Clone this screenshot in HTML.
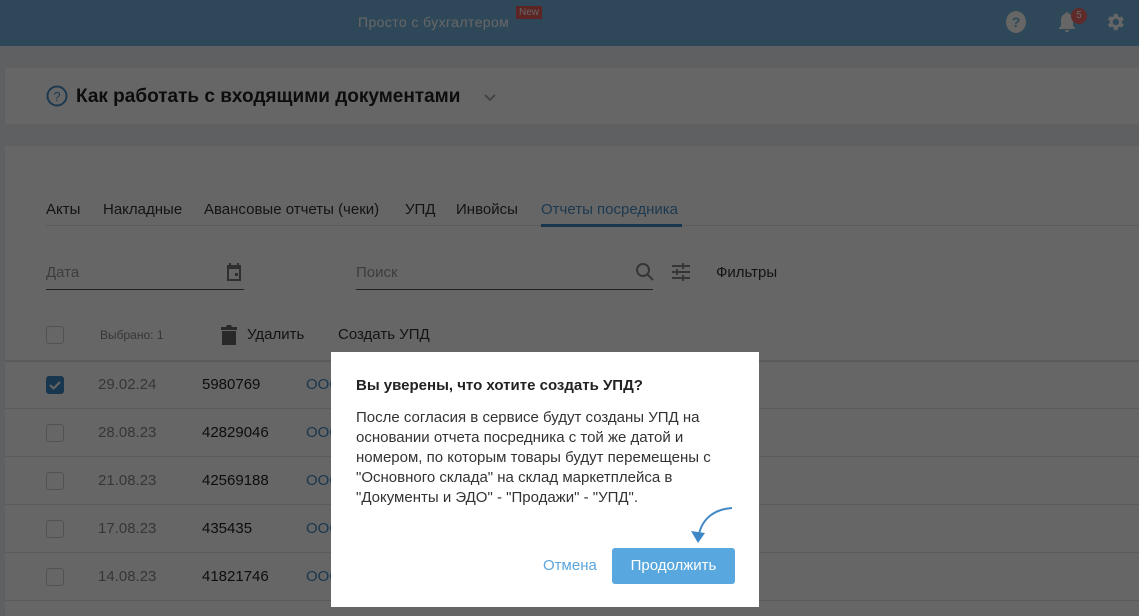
<!DOCTYPE html>
<html><head><meta charset="utf-8"><style>
*{box-sizing:border-box;margin:0;padding:0}
body{width:1139px;height:616px;overflow:hidden;background:#eef0f2;font-family:"Liberation Sans","Noto Sans CJK SC",sans-serif;position:relative;color:#333}
.hdr{position:absolute;left:0;top:0;width:1139px;height:46px;background:#75b4de}
.card{position:absolute;background:#fff}
.t{position:absolute;white-space:nowrap}
.ov{position:absolute;left:0;top:0;width:1139px;height:616px;background:rgba(0,0,0,0.6)}
.cb{position:absolute;left:46px;width:18px;height:18px;border:1px solid #ccc;border-radius:3px;background:#fff}
.line{position:absolute;left:5px;right:0;height:1px;background:#e4e4e4}
.modal{position:absolute;left:331px;top:352px;width:428px;height:255px;background:#fff}
</style></head><body>
<div class="hdr">
 <div class="t" style="left:358px;top:14px;font-size:14px;color:#fff;letter-spacing:0.4px">Просто с бухгалтером</div>
 <div class="t" style="left:516px;top:6px;font-size:10px;color:#fff;background:#e85a5a;padding:1px 3px">New</div>
 <svg style="position:absolute;left:1006px;top:11px" width="20" height="22" viewBox="0 0 20 22"><ellipse cx="10" cy="11" rx="10" ry="11" fill="#fff"/><text x="10" y="16" font-size="14" font-weight="bold" text-anchor="middle" fill="#75b4de" font-family="Liberation Sans">?</text></svg>
 <svg style="position:absolute;left:1057px;top:11px" width="20" height="22" viewBox="0 0 20 22"><path d="M10 1c-1 0-1.5.8-1.5 1.6C5.5 3.5 4 6 4 9v6l-2 2v1h16v-1l-2-2V9c0-3-1.5-5.5-4.5-6.4C11.5 1.8 11 1 10 1zM8 19a2 2 0 004 0z" fill="#fff"/></svg>
 <div class="t" style="left:1071px;top:8px;width:16px;height:16px;border-radius:8px;background:#f06a6a;color:#fff;font-size:10px;text-align:center;line-height:16px">5</div>
 <svg style="position:absolute;left:1104px;top:11px" width="22" height="22" viewBox="0 0 24 24"><path fill="#fff" d="M19.4 13a7.5 7.5 0 000-2l2.1-1.6-2-3.5-2.5 1a7 7 0 00-1.7-1L14.9 3h-4l-.4 2.7a7 7 0 00-1.7 1l-2.5-1-2 3.5L6.4 11a7.5 7.5 0 000 2l-2.1 1.6 2 3.5 2.5-1a7 7 0 001.7 1l.4 2.7h4l.4-2.7a7 7 0 001.7-1l2.5 1 2-3.5zM12.9 15.5a3.5 3.5 0 110-7 3.5 3.5 0 010 7z"/></svg>
</div>
<div class="card" style="left:5px;top:68px;width:1134px;height:56px">
 <svg style="position:absolute;left:41px;top:17px" width="22" height="22" viewBox="0 0 22 22"><circle cx="11" cy="11" r="9.5" fill="none" stroke="#4a90c8" stroke-width="2"/><text x="11" y="16" font-size="13" text-anchor="middle" fill="#4a90c8" font-family="Liberation Sans">?</text></svg>
 <div class="t" style="left:71px;top:18px;font-size:19px;font-weight:bold;color:#222">Как работать с входящими документами</div>
 <svg style="position:absolute;left:478px;top:25px" width="14" height="10" viewBox="0 0 14 10"><path d="M2 2l5 5 5-5" stroke="#aaa" stroke-width="2" fill="none"/></svg>
</div>
<div class="card" style="left:5px;top:146px;width:1134px;height:470px">
 <div class="t" style="left:41px;top:55px;font-size:15px;color:#333">Акты</div>
 <div class="t" style="left:98px;top:55px;font-size:15px;color:#333">Накладные</div>
 <div class="t" style="left:199px;top:55px;font-size:15px;color:#333">Авансовые отчеты (чеки)</div>
 <div class="t" style="left:400px;top:55px;font-size:15px;color:#333">УПД</div>
 <div class="t" style="left:451px;top:55px;font-size:15px;color:#333">Инвойсы</div>
 <div class="t" style="left:536px;top:55px;font-size:15px;color:#4a90c8">Отчеты посредника</div>
 <div style="position:absolute;left:41px;top:79px;right:0;height:1px;background:#e4e4e4"></div>
 <div style="position:absolute;left:536px;top:78px;width:141px;height:3px;background:#3f88c5"></div>
 <div class="t" style="left:41px;top:118px;font-size:15px;color:#999">Дата</div>
 <svg style="position:absolute;left:219px;top:116px" width="20" height="20" viewBox="0 0 20 20"><path fill="#777" d="M3 3h2V1h2v2h6V1h2v2h2v16H3zM5 7v10h10V7zm6 4h3v3h-3z"/></svg>
 <div style="position:absolute;left:41px;top:143px;width:198px;height:1px;background:#555"></div>
 <div class="t" style="left:351px;top:118px;font-size:15px;color:#999">Поиск</div>
 <svg style="position:absolute;left:630px;top:116px" width="20" height="20" viewBox="0 0 20 20"><circle cx="8" cy="8" r="6" fill="none" stroke="#888" stroke-width="2"/><path d="M12.5 12.5l5.5 5.5" stroke="#888" stroke-width="2"/></svg>
 <div style="position:absolute;left:351px;top:143px;width:297px;height:1px;background:#555"></div>
 <svg style="position:absolute;left:666px;top:116px" width="20" height="20" viewBox="0 0 20 20" stroke="#888" stroke-width="2"><path d="M1 4h18M1 10h18M1 16h18"/><path d="M12 1v6M6 7v6M12 13v6" /></svg>
 <div class="t" style="left:711px;top:118px;font-size:15px;color:#333">Фильтры</div>
 <div class="cb" style="left:41px;top:180px"></div>
 <div class="t" style="left:95px;top:182px;font-size:12px;color:#888">Выбрано: 1</div>
 <svg style="position:absolute;left:215px;top:178px" width="18" height="22" viewBox="0 0 18 22"><path fill="#666" d="M1 3h5l1-2h4l1 2h5v3H1zM2 7h14v14H2z"/></svg>
 <div class="t" style="left:242px;top:180px;font-size:15px;color:#333">Удалить</div>
 <div class="t" style="left:333px;top:180px;font-size:15px;color:#333">Создать УПД</div>
</div>
<div class="line" style="top:360px;height:2px"></div>
<div class="line" style="top:408px"></div><div class="line" style="top:456px"></div><div class="line" style="top:504px"></div><div class="line" style="top:552px"></div><div class="line" style="top:600px"></div>
<div class="cb" style="top:376px;background:#3f88c5;border-color:#3f88c5"><svg width="16" height="16" viewBox="0 0 16 16"><path d="M3 8l3.5 3.5L13 5" stroke="#fff" stroke-width="2" fill="none"/></svg></div>
<div class="cb" style="top:424px"></div><div class="cb" style="top:472px"></div><div class="cb" style="top:520px"></div><div class="cb" style="top:568px"></div>
<div class="t" style="left:98px;top:376px;font-size:15px;color:#888">29.02.24</div>
<div class="t" style="left:202px;top:376px;font-size:15px;color:#222">5980769</div>
<div class="t" style="left:306px;top:376px;font-size:15px;color:#3f88c5">ООО</div>
<div class="t" style="left:98px;top:424px;font-size:15px;color:#888">28.08.23</div>
<div class="t" style="left:202px;top:424px;font-size:15px;color:#222">42829046</div>
<div class="t" style="left:306px;top:424px;font-size:15px;color:#3f88c5">ООО</div>
<div class="t" style="left:98px;top:472px;font-size:15px;color:#888">21.08.23</div>
<div class="t" style="left:202px;top:472px;font-size:15px;color:#222">42569188</div>
<div class="t" style="left:306px;top:472px;font-size:15px;color:#3f88c5">ООО</div>
<div class="t" style="left:98px;top:520px;font-size:15px;color:#888">17.08.23</div>
<div class="t" style="left:202px;top:520px;font-size:15px;color:#222">435435</div>
<div class="t" style="left:306px;top:520px;font-size:15px;color:#3f88c5">ООО</div>
<div class="t" style="left:98px;top:568px;font-size:15px;color:#888">14.08.23</div>
<div class="t" style="left:202px;top:568px;font-size:15px;color:#222">41821746</div>
<div class="t" style="left:306px;top:568px;font-size:15px;color:#3f88c5">ООО</div>
<div class="ov"></div>
<div class="modal">
 <div class="t" style="left:25px;top:25px;font-size:15px;font-weight:bold;color:#222">Вы уверены, что хотите создать УПД?</div>
 <div style="position:absolute;left:25px;top:56px;width:395px;font-size:15px;line-height:20px;color:#333">После согласия в сервисе будут созданы УПД на основании отчета посредника с той же датой и номером, по которым товары будут перемещены с "Основного склада" на склад маркетплейса в "Документы и ЭДО" - "Продажи" - "УПД".</div>
 <svg style="position:absolute;left:345px;top:150px" width="60" height="45" viewBox="0 0 60 45"><path d="M56 6C40 7 27 15 23 32" stroke="#3f88c5" stroke-width="2" fill="none"/><path d="M15 29l7 12 7-10z" fill="#3f88c5"/></svg>
 <div class="t" style="left:212px;top:205px;font-size:15px;color:#5aa5dd">Отмена</div>
 <div style="position:absolute;left:281px;top:196px;width:123px;height:36px;background:#58a7de;border-radius:3px;color:#fff;font-size:15px;text-align:center;line-height:36px">Продолжить</div>
</div>
</body></html>
